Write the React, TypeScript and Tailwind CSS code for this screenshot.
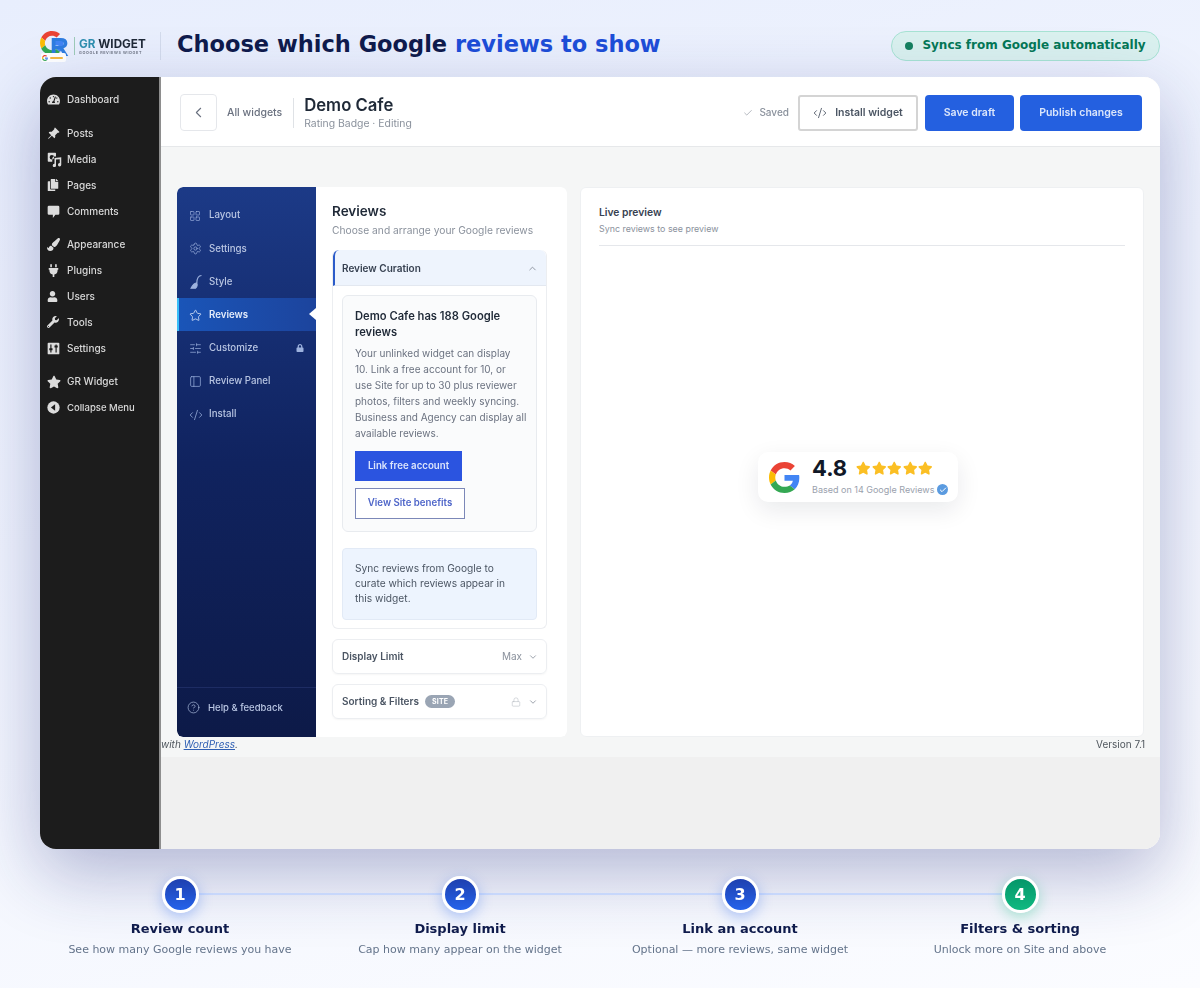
import type { ReactNode } from "react";
import {
  Check,
  ChevronDown,
  ChevronLeft,
  ChevronUp,
  CircleHelp,
  CodeXml,
  LayoutGrid,
  Lock,
  PanelLeft,
  Settings,
  SlidersHorizontal,
  Star,
} from "lucide-react";
import { BsPinAngleFill } from "react-icons/bs";
import {
  FaCopy,
  FaLock,
  FaPaintBrush,
  FaPlug,
  FaStar,
  FaTachometerAlt,
  FaUser,
  FaWrench,
} from "react-icons/fa";

function GoogleG({ size }: { size: number }) {
  return (
    <svg width={size} height={size} viewBox="0 0 48 48">
      <path fill="#EA4335" d="M24 9.5c3.5 0 6.700 1.200 9.200 3.600l6.900-6.900C35.900 2.400 30.400 0 24 0 14.600 0 6.500 5.400 2.600 13.200l8 6.200C12.400 13.600 17.700 9.500 24 9.500z" />
      <path fill="#4285F4" d="M47 24.500c0-1.600-.1-3.100-.4-4.500H24v9h12.900c-.6 3-2.200 5.500-4.700 7.200l7.700 6c4.500-4.200 7.100-10.300 7.100-17.700z" />
      <path fill="#FBBC05" d="M10.500 28.600c-.5-1.400-.8-3-.8-4.600s.3-3.200.8-4.600l-8-6.200C.9 16.500 0 20.100 0 24s.9 7.500 2.600 10.800l7.900-6.200z" />
      <path fill="#34A853" d="M24 48c6.500 0 11.900-2.100 15.900-5.800l-7.700-6c-2.200 1.400-4.900 2.300-8.200 2.300-6.300 0-11.600-4.100-13.500-9.900l-8 6.200C6.500 42.600 14.600 48 24 48z" />
    </svg>
  );
}

function MediaIcon() {
  return (
    <svg width="15" height="15" viewBox="0 0 20 20" fill="currentColor">
      <path fillRule="evenodd" d="M2 1h9a1 1 0 0 1 1 1v4H9a3 3 0 0 0-2 2.500V13H2a1 1 0 0 1-1-1V2a1 1 0 0 1 1-1zm4.500 3a3 3 0 1 0 0 6 3 3 0 0 0 0-6z" />
      <path d="M10 8l9-1v10a2.200 2.200 0 1 1-2-2.200V9.500l-5 .6V18a2.200 2.200 0 1 1-2-2.200V8z" />
    </svg>
  );
}

function CommentIcon() {
  return (
    <svg width="13" height="13" viewBox="0 0 20 20" fill="currentColor">
      <path d="M3 1h14a2 2 0 0 1 2 2v10a2 2 0 0 1-2 2h-4l-4 5v-5H3a2 2 0 0 1-2-2V3a2 2 0 0 1 2-2z" />
    </svg>
  );
}

function SettingsBoxIcon() {
  return (
    <svg width="13" height="13" viewBox="0 0 20 20">
      <rect x="1" y="1" width="18" height="18" rx="1.500" fill="currentColor" />
      <path d="M6 4v12M14 4v12" stroke="#1c1c1c" strokeWidth="1.800" />
      <path d="M3.500 11h5M11.500 7h5" stroke="#1c1c1c" strokeWidth="3" />
    </svg>
  );
}

function CollapseIcon() {
  return (
    <svg width="13" height="13" viewBox="0 0 20 20">
      <circle cx="10" cy="10" r="9.500" fill="currentColor" />
      <path d="M12.500 5v10L6 10z" fill="#1c1c1c" />
    </svg>
  );
}

function StyleIcon() {
  return (
    <svg width="14" height="16" viewBox="0 0 14 16" fill="none" stroke="currentColor" strokeWidth="1.100">
      <path d="M12.500 1.500C9.500 1.500 8 4 7.800 9" />
      <path d="M7.800 9c-2.200 0-3.800 1.500-5.800 5.200h4.600C8 13 8.500 11 7.800 9z" fill="currentColor" />
    </svg>
  );
}

function WpItem({ icon, label, className = "", small }: { icon: ReactNode; label: string; className?: string; small?: boolean }) {
  return (
    <div className={`flex h-[25.800px] items-center ${className}`}>
      <span className="flex w-[27px] shrink-0 items-center pl-[7px] text-[#dcdcdc]">{icon}</span>
      <span className={small ? "text-[9.500px] font-medium whitespace-nowrap text-[#d8d8d8]" : "text-[10px] font-medium text-[#d8d8d8]"}>{label}</span>
    </div>
  );
}

function WpSidebar() {
  return (
    <aside className="w-[121px] shrink-0 border-r-2 border-[#8e8e8e] bg-[#1c1c1c] pt-[10px]">
      <WpItem icon={<FaTachometerAlt size={13} />} label="Dashboard" />
      <WpItem className="mt-2" icon={<BsPinAngleFill size={13} />} label="Posts" />
      <WpItem icon={<MediaIcon />} label="Media" />
      <WpItem icon={<FaCopy size={12} />} label="Pages" />
      <WpItem icon={<CommentIcon />} label="Comments" />
      <WpItem className="mt-2" icon={<FaPaintBrush size={13} />} label="Appearance" />
      <WpItem icon={<FaPlug size={13} />} label="Plugins" />
      <WpItem icon={<FaUser size={11} />} label="Users" />
      <WpItem icon={<FaWrench size={12} />} label="Tools" />
      <WpItem icon={<SettingsBoxIcon />} label="Settings" />
      <WpItem className="mt-2" icon={<FaStar size={14} />} label="GR Widget" />
      <WpItem small icon={<CollapseIcon />} label="Collapse Menu" />
    </aside>
  );
}

function TopBar() {
  return (
    <header className="flex h-[70px] shrink-0 items-center border-b border-[#e6e8ea] bg-white pl-[19px] pr-[18px] pt-[2px]">
      <button className="flex h-[37px] w-[37px] items-center justify-center rounded-[4px] border border-[#e5e7eb] text-[#6b7280]">
        <ChevronLeft size={17} strokeWidth={1.500} />
      </button>
      <span className="ml-[10px] text-[10.500px] font-medium text-[#6b7280]">All widgets</span>
      <span className="ml-[11px] h-[30px] w-px bg-[#dfe2e6]" />
      <div className="ml-[10px] flex flex-col">
        <span className="text-[16.700px] leading-[22px] font-semibold text-[#1f2937]">Demo Cafe</span>
        <span className="text-[10.400px] leading-[16px] text-[#8a919c]">Rating Badge · Editing</span>
      </div>
      <div className="ml-auto flex items-center">
        <Check size={10} strokeWidth={1.500} className="text-[#8a919c]" />
        <span className="ml-[6px] text-[10px] font-medium text-[#8a919c]">Saved</span>
        <button className="ml-[9px] flex h-[36px] w-[120px] items-center justify-center gap-2 rounded-[3px] border-2 border-[#d4d4d4] bg-white text-[10.500px] font-semibold text-[#4b5563]">
          <CodeXml size={14} strokeWidth={1.500} />
          Install widget
        </button>
        <button className="ml-[7px] h-[36px] w-[89px] rounded-[4px] bg-[#2460e0] text-[10.500px] font-semibold text-[#dbe6fb]">
          Save draft
        </button>
        <button className="ml-[6px] h-[36px] w-[122px] rounded-[4px] bg-[#2460e0] text-[10.500px] font-semibold text-[#dbe6fb]">
          Publish changes
        </button>
      </div>
    </header>
  );
}

function NavItem({ icon, label, active, trailing }: { icon: ReactNode; label: string; active?: boolean; trailing?: ReactNode }) {
  return (
    <div
      className={
        active
          ? "relative flex h-[33.200px] items-center border-l-2 border-[#38bdf8] bg-gradient-to-r from-[#1a55b8] to-[#1c449d] pl-[10px] pr-3 pt-[2px] text-white"
          : "flex h-[33.200px] items-center pl-3 pr-3 pt-[2px]"
      }
    >
      <span className={active ? "w-[20px] text-[#d7e3f8]" : "w-[20px] text-[#9db2de]"}>{icon}</span>
      <span className={active ? "text-[9.700px] font-semibold text-[#e4ecfa]" : "text-[9.700px] font-medium text-[#b8c5e2]"}>{label}</span>
      {trailing && <span className="ml-auto text-[#9db2de]">{trailing}</span>}
      {active && (
        <span className="absolute right-0 top-1/2 h-0 w-0 -translate-y-1/2 border-y-[6px] border-r-[7px] border-y-transparent border-r-white" />
      )}
    </div>
  );
}

function PluginNav() {
  return (
    <nav className="flex w-[139px] shrink-0 flex-col rounded-l-[6px] bg-gradient-to-b from-[#1c3a87] via-[#10235f] to-[#0d1a48] pt-[11px]">
      <NavItem icon={<LayoutGrid size={12} strokeWidth={1.300} />} label="Layout" />
      <NavItem icon={<Settings size={13} strokeWidth={1.300} />} label="Settings" />
      <NavItem icon={<StyleIcon />} label="Style" />
      <NavItem active icon={<Star size={13} strokeWidth={1.500} />} label="Reviews" />
      <NavItem icon={<SlidersHorizontal size={13} strokeWidth={1.300} />} label="Customize" trailing={<FaLock size={8} />} />
      <NavItem icon={<PanelLeft size={13} strokeWidth={1.300} />} label="Review Panel" />
      <NavItem icon={<CodeXml size={14} strokeWidth={1.300} />} label="Install" />
      <div className="mt-auto flex h-[50px] items-start border-t border-[#1d2c63] pl-[10px] pt-[13px] text-[#a9b9dc]">
        <CircleHelp size={13} strokeWidth={1.300} />
        <span className="ml-2 text-[9.500px] leading-[13px] font-medium text-[#b8c5e2]">Help &amp; feedback</span>
      </div>
    </nav>
  );
}

function CurationCard() {
  return (
    <div className="rounded-[6px] border border-[#e8ebef] bg-[#fafbfc] pb-[12px] pl-3 pr-2 pt-[12px]">
      <h4 className="text-[11.200px] leading-[16px] font-semibold text-[#1f2937]">Demo Cafe has 188 Google reviews</h4>
      <p className="mt-[5px] whitespace-nowrap text-[10px] leading-[16px] text-[#6b7280]">
        Your unlinked widget can display
        <br />
        10. Link a free account for 10, or
        <br />
        use Site for up to 30 plus reviewer
        <br />
        photos, filters and weekly syncing.
        <br />
        Business and Agency can display all
        <br />
        available reviews.
      </p>
      <button className="mt-[10px] block h-[30px] w-[107px] bg-[#2b54e0] text-[9.700px] font-semibold text-[#dbe4fb]">
        Link free account
      </button>
      <button className="mt-[7px] block h-[31px] w-[110px] border border-[#7c88b8] bg-white text-[9.700px] font-semibold text-[#4f66c9]">
        View Site benefits
      </button>
    </div>
  );
}

function ReviewsPanel() {
  return (
    <section className="flex w-[251px] shrink-0 flex-col rounded-r-[6px] bg-white pl-4 pr-5 pt-[15px]">
      <h3 className="text-[13.500px] leading-[18px] font-semibold text-[#1f2937]">Reviews</h3>
      <p className="mt-[2px] text-[10.250px] leading-[17px] whitespace-nowrap text-[#8a919c]">Choose and arrange your Google reviews</p>
      <div className="mt-[11px] h-[379px] overflow-hidden rounded-[6px] border-x border-b border-[#eceef1]">
        <div className="flex h-[36px] items-center rounded-t-[6px] border-b border-[#e3e8f0] border-l-2 border-l-[#2b5bc9] bg-[#eef4fd] pl-[7px] pr-2 pt-[1px]">
          <span className="text-[10px] font-semibold text-[#374151]">Review Curation</span>
          <ChevronUp size={11} className="ml-auto text-[#8a919c]" />
        </div>
        <div className="px-[9px] pt-[9px]">
          <CurationCard />
          <div className="mt-[16px] rounded-[4px] border border-[#e2eaf6] bg-[#edf4fe] px-3 pb-[13px] pt-[12px] text-[10.200px] leading-[15px] text-[#4b5563]">
            Sync reviews from Google to curate which reviews appear in this widget.
          </div>
        </div>
      </div>
      <div className="mt-[10px] flex h-[35px] items-center rounded-[6px] border border-[#eceef1] pl-[9px] pr-2 shadow-[0_1px_2px_rgba(0,0,0,0.04)]">
        <span className="text-[10px] font-semibold text-[#4b5563]">Display Limit</span>
        <span className="ml-auto text-[10px] text-[#8a919c]">Max</span>
        <ChevronDown size={10} className="ml-[6px] text-[#8a919c]" />
      </div>
      <div className="mt-[10px] flex h-[35px] items-center rounded-[6px] border border-[#eceef1] pl-[9px] pr-2 shadow-[0_1px_2px_rgba(0,0,0,0.04)]">
        <span className="text-[10px] font-semibold text-[#4b5563]">Sorting &amp; Filters</span>
        <span className="ml-[6px] rounded-full bg-[#9aa5b4] px-[7px] text-[7px] leading-[13px] font-bold tracking-wide text-white">SITE</span>
        <Lock size={10} strokeWidth={1.300} className="ml-auto text-[#b5bac2]" />
        <ChevronDown size={10} className="ml-[7px] text-[#8a919c]" />
      </div>
    </section>
  );
}

function RatingBadge() {
  return (
    <div className="flex h-[50px] w-[200px] items-center rounded-[10px] bg-white pl-[11px] shadow-[0_8px_24px_rgba(15,23,42,0.09)]">
      <GoogleG size={31} />
      <div className="ml-3 flex flex-col pb-[3px]">
        <div className="flex items-center">
          <span className="text-[22px] leading-[27px] font-bold text-[#111827]">4.8</span>
          <span className="ml-[9px] flex gap-[1px]">
            {[0, 1, 2, 3, 4].map((i) => (
              <FaStar key={i} size={14.500} className="text-[#fbbf24]" />
            ))}
          </span>
        </div>
        <div className="mt-[1px] flex items-center">
          <span className="text-[9px] leading-[13px] text-[#9aa1ad]">Based on 14 Google Reviews</span>
          <span className="ml-[3px] flex h-[11px] w-[11px] items-center justify-center rounded-full bg-[#5b9be0] text-white">
            <Check size={8} strokeWidth={3} />
          </span>
        </div>
      </div>
    </div>
  );
}

function LivePreview() {
  return (
    <section className="flex flex-1 flex-col rounded-[6px] border border-[#eef0f2] bg-white px-[18px] pt-[17px]">
      <h4 className="text-[10.300px] leading-[14px] font-semibold text-[#374151]">Live preview</h4>
      <p className="mt-[3px] text-[8.900px] leading-[13px] text-[#8a919c]">Sync reviews to see preview</p>
      <div className="mt-[10px] h-px bg-[#e5e7eb]" />
      <div className="flex flex-1 items-start justify-center pr-2 pt-[206px]">
        <RatingBadge />
      </div>
    </section>
  );
}

function EditorCard() {
  return (
    <div className="mx-10 mt-[16px] flex h-[772px] overflow-hidden rounded-[16px] bg-white font-['Inter',sans-serif] shadow-[0_24px_70px_rgba(30,40,120,0.32)] blur-[0.35px]">
      <WpSidebar />
      <div className="flex min-w-0 flex-1 flex-col bg-[#f0f0f0]">
        <TopBar />
        <div className="flex h-[610px] flex-col bg-[#f5f6f6] pl-[16px] pr-[15px] pt-[40px]">
          <div className="mr-px flex h-[550px] gap-[13px]">
            <div className="flex overflow-hidden rounded-[6px]">
              <PluginNav />
              <ReviewsPanel />
            </div>
            <LivePreview />
          </div>
          <div className="-ml-[16px] flex h-[14px] items-center justify-between text-[10px] text-[#50575e]">
            <span className="italic">
              with <span className="text-[#2f5fb3] underline">WordPress</span>.
            </span>
            <span>Version 7.1</span>
          </div>
        </div>
      </div>
    </div>
  );
}

const steps = [
  { n: "1", title: "Review count", sub: "See how many Google reviews you have" },
  { n: "2", title: "Display limit", sub: "Cap how many appear on the widget" },
  { n: "3", title: "Link an account", sub: "Optional — more reviews, same widget" },
  { n: "4", title: "Filters & sorting", sub: "Unlock more on Site and above", green: true },
];

function Steps() {
  return (
    <div className="relative mx-10 mt-[27px] grid grid-cols-4">
      <div className="absolute left-[140px] right-[140px] top-[17px] h-[2px] bg-[#c7d7fb]" />
      {steps.map((s) => (
        <div key={s.n} className="relative flex flex-col items-center">
          <div
            className={
              s.green
                ? "flex h-[37px] w-[37px] items-center justify-center rounded-full border-[3px] border-white bg-gradient-to-b from-[#059669] to-[#10b981] text-[16px] font-bold text-white shadow-[0_4px_14px_rgba(16,185,129,0.35)]"
                : "flex h-[37px] w-[37px] items-center justify-center rounded-full border-[3px] border-white bg-gradient-to-b from-[#1e40af] to-[#2563eb] text-[16px] font-bold text-white shadow-[0_4px_14px_rgba(37,99,235,0.35)]"
            }
          >
            {s.n}
          </div>
          <div className="mt-[6px] text-[13px] leading-[20px] font-bold text-[#0f1b4c]">{s.title}</div>
          <div className="mt-[2px] text-[11px] leading-[18px] text-[#64748b]">{s.sub}</div>
        </div>
      ))}
    </div>
  );
}

function Logo() {
  return (
    <div className="flex w-[106px] shrink-0 items-center blur-[0.3px]">
      <div className="relative h-[30px] w-[34px] shrink-0">
        <GoogleG size={24} />
        <span className="absolute left-[10px] top-[3px] font-['Liberation_Sans',sans-serif] text-[26px] leading-[27px] font-bold text-[#2f7de0]">R</span>
        <span className="absolute bottom-[-1px] left-[1px] flex h-[9px] w-[25px] items-center gap-[2px] rounded-[2px] bg-white pl-[1px]">
          <GoogleG size={6} />
          <span className="h-[2px] w-[13px] rounded-full bg-[#f5b942]" />
        </span>
      </div>
      <span className="h-[18px] w-px bg-[#9ecbb8]" />
      <div className="ml-1 flex flex-col font-['Inter',sans-serif]">
        <span className="text-[11.700px] leading-[12px] font-bold whitespace-nowrap text-[#1f2937]">
          <span className="text-[#2f8fb0]">GR</span> WIDGET
        </span>
        <span className="text-[3.800px] leading-[5px] font-semibold tracking-[0.6px] whitespace-nowrap text-[#6b7280]">GOOGLE REVIEWS WIDGET</span>
      </div>
    </div>
  );
}

export default function App() {
  return (
    <div className="h-[988px] w-[1200px] overflow-hidden bg-[linear-gradient(165deg,#e8eefd,#fbfcff)] font-['DejaVu_Sans',sans-serif]">
      {/* Header */}
      <div className="mx-10 mt-[31px] flex h-[30px] items-center">
        <Logo />
        <span className="ml-[14px] h-[28px] w-px bg-[#d3dbec]" />
        <h1 className="ml-4 -translate-y-px text-[22.500px] font-bold text-[#0f1b4c]">
          Choose which Google <span className="text-[#1d4ed8]">reviews to show</span>
        </h1>
        <div className="ml-auto flex h-[30px] w-[269px] items-center justify-center gap-[9px] rounded-full border border-[#a7e3d4] bg-[#daf1ef]">
          <span className="h-[8px] w-[8px] rounded-full bg-[#15805f]" />
          <span className="-translate-y-px text-[12px] font-bold text-[#047857]">Syncs from Google automatically</span>
        </div>
      </div>

      <EditorCard />
      <Steps />
    </div>
  );
}
